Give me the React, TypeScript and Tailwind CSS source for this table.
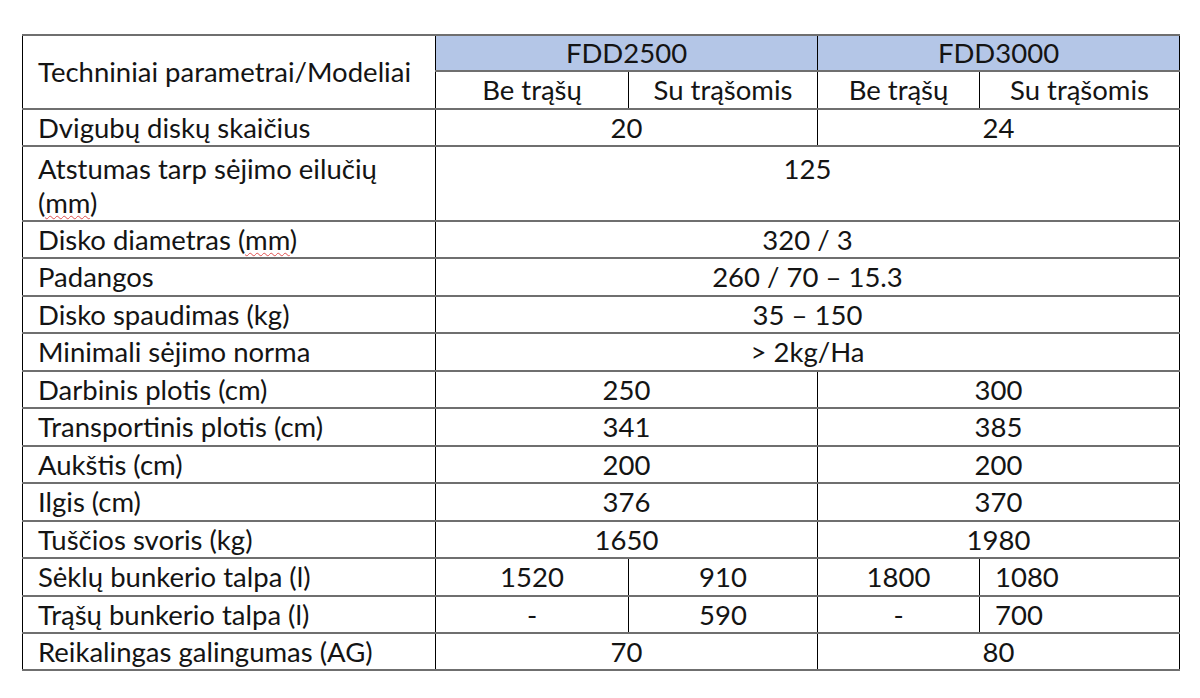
const cell = "border-y-2 border-y-[#6f6f6f] border-x border-x-black px-[15px] py-0 font-normal";

const Mm = () => (
  <span className="underline decoration-wavy decoration-[#e05050] decoration-1 underline-offset-[2px]">mm</span>
);

type Row = { label: React.ReactNode; vals: (string | null)[]; h: string; leftLast?: boolean };

const rows: Row[] = [
  { label: "Disko diametras", vals: ["320 / 3"], h: "h-[37px]" },
  { label: "Padangos", vals: ["260 / 70 – 15.3"], h: "h-[38px]" },
  { label: "Disko spaudimas (kg)", vals: ["35 – 150"], h: "h-[37px]" },
  { label: "Minimali sėjimo norma", vals: ["> 2kg/Ha"], h: "h-[38px]" },
  { label: "Darbinis plotis (cm)", vals: ["250", "300"], h: "h-[37px]" },
  { label: "Transportinis plotis (cm)", vals: ["341", "385"], h: "h-[38px]" },
  { label: "Aukštis (cm)", vals: ["200", "200"], h: "h-[37px]" },
  { label: "Ilgis (cm)", vals: ["376", "370"], h: "h-[38px]" },
  { label: "Tuščios svoris (kg)", vals: ["1650", "1980"], h: "h-[37px]" },
  { label: "Sėklų bunkerio talpa (l)", vals: ["1520", "910", "1800", "1080"], h: "h-[38px]", leftLast: true },
  { label: "Trąšų bunkerio talpa (l)", vals: ["-", "590", "-", "700"], h: "h-[37px]", leftLast: true },
  { label: "Reikalingas galingumas (AG)", vals: ["70", "80"], h: "h-[37px]" },
];

export default function App() {
  return (
    <div className="min-h-[698px] w-[1200px] bg-white pt-[34px] pl-[22px] text-[#141414] font-['Lato','Liberation_Sans',sans-serif] text-[27.5px] leading-none">
      <table className="table-fixed border-collapse w-[1157px]">
        <colgroup>
          <col className="w-[413px]" />
          <col className="w-[193px]" />
          <col className="w-[189px]" />
          <col className="w-[162px]" />
          <col className="w-[200px]" />
        </colgroup>
        <tbody>
          <tr className="h-[36px]">
            <td rowSpan={2} className={`${cell} text-left`}>Techniniai parametrai/Modeliai</td>
            <td colSpan={2} className={`${cell} bg-[#b4c6e7] text-center`}>FDD2500</td>
            <td colSpan={2} className={`${cell} bg-[#b4c6e7] text-center`}>FDD3000</td>
          </tr>
          <tr className="h-[38px]">
            <td className={`${cell} text-center`}>Be trąšų</td>
            <td className={`${cell} text-center`}>Su trąšomis</td>
            <td className={`${cell} text-center`}>Be trąšų</td>
            <td className={`${cell} text-center`}>Su trąšomis</td>
          </tr>
          <tr className="h-[37px]">
            <td className={cell}>Dvigubų diskų skaičius</td>
            <td colSpan={2} className={`${cell} text-center`}>20</td>
            <td colSpan={2} className={`${cell} text-center`}>24</td>
          </tr>
          <tr className="h-[73px]">
            <td className={`${cell} align-top pt-[5px] leading-[34px]`}>
              Atstumas tarp sėjimo eilučių <br />(<Mm />)
            </td>
            <td colSpan={4} className={`${cell} align-top pt-[5px] leading-[34px] text-center`}>125</td>
          </tr>
          {rows.map((r, i) => (
            <tr key={i} className={r.h}>
              <td className={cell}>
                {i === 0 ? (
                  <>
                    Disko diametras (<Mm />)
                  </>
                ) : (
                  r.label
                )}
              </td>
              {r.vals.length === 1 && (
                <td colSpan={4} className={`${cell} text-center`}>{r.vals[0]}</td>
              )}
              {r.vals.length === 2 &&
                r.vals.map((v, j) => (
                  <td key={j} colSpan={2} className={`${cell} text-center`}>{v}</td>
                ))}
              {r.vals.length === 4 &&
                r.vals.map((v, j) => (
                  <td key={j} className={`${cell} ${j === 3 && r.leftLast ? "text-left" : "text-center"}`}>{v}</td>
                ))}
            </tr>
          ))}
        </tbody>
      </table>
    </div>
  );
}
